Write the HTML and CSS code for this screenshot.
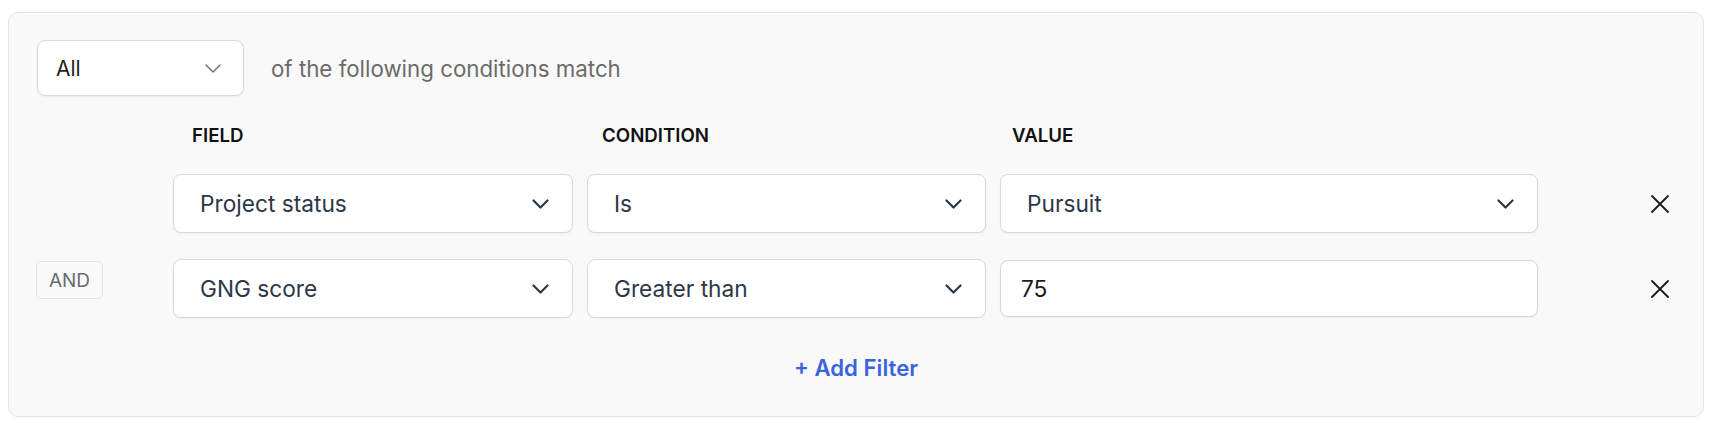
FILE: index.html
```html
<!DOCTYPE html>
<html>
<head>
    <title>Filter Conditions</title>
    <link rel="stylesheet" href="styles.css">
</head>
<body>
    <div class="panel">
        <div class="match-row">
            <div class="select select-all">
                <span>All</span>
                <svg class="chevron" width="16" height="9" viewBox="0 0 16 9"><path d="M1 1l7 7 7-7" fill="none" stroke="#6b6b6b" stroke-width="1.4" stroke-linecap="round" stroke-linejoin="round"/></svg>
            </div>
            <span class="match-text">of the following conditions match</span>
        </div>

        <div class="filters">
            <div></div>
            <div class="col-label label-field">FIELD</div>
            <div class="col-label label-condition">CONDITION</div>
            <div class="col-label label-value">VALUE</div>
            <div></div>
            <div></div>

            <!-- row 1 -->
            <div></div>
            <div class="select">
                <span>Project status</span>
                <svg class="chevron" width="17" height="10" viewBox="0 0 17 10"><path d="M1.5 1.5l7 7 7-7" fill="none" stroke="#2d3748" stroke-width="2.2" stroke-linecap="round" stroke-linejoin="round"/></svg>
            </div>
            <div class="select">
                <span>Is</span>
                <svg class="chevron" width="17" height="10" viewBox="0 0 17 10"><path d="M1.5 1.5l7 7 7-7" fill="none" stroke="#2d3748" stroke-width="2.2" stroke-linecap="round" stroke-linejoin="round"/></svg>
            </div>
            <div class="select">
                <span>Pursuit</span>
                <svg class="chevron" width="17" height="10" viewBox="0 0 17 10"><path d="M1.5 1.5l7 7 7-7" fill="none" stroke="#2d3748" stroke-width="2.2" stroke-linecap="round" stroke-linejoin="round"/></svg>
            </div>
            <div></div>
            <button class="remove">
                <svg width="18" height="18" viewBox="0 0 18 18"><path d="M1 1l16 16M17 1L1 17" stroke="#1a1a1a" stroke-width="1.8" stroke-linecap="round"/></svg>
            </button>

            <!-- row 2 -->
            <div class="badge">AND</div>
            <div class="select">
                <span>GNG score</span>
                <svg class="chevron" width="17" height="10" viewBox="0 0 17 10"><path d="M1.5 1.5l7 7 7-7" fill="none" stroke="#2d3748" stroke-width="2.2" stroke-linecap="round" stroke-linejoin="round"/></svg>
            </div>
            <div class="select">
                <span>Greater than</span>
                <svg class="chevron" width="17" height="10" viewBox="0 0 17 10"><path d="M1.5 1.5l7 7 7-7" fill="none" stroke="#2d3748" stroke-width="2.2" stroke-linecap="round" stroke-linejoin="round"/></svg>
            </div>
            <input class="value-input" type="text" value="75">
            <div></div>
            <button class="remove">
                <svg width="18" height="18" viewBox="0 0 18 18"><path d="M1 1l16 16M17 1L1 17" stroke="#1a1a1a" stroke-width="1.8" stroke-linecap="round"/></svg>
            </button>
        </div>

        <div class="add-row">
            <a href="#" class="add-filter">+ Add Filter</a>
        </div>
    </div>
</body>
</html>
```

FILE: styles.css
```css
body {
    font-family: Inter, "Noto Sans", sans-serif;
    background-color: #fff;
    color: #1f1f1f;
    margin: 12px 8px;
}
.panel {
    background-color: #f9f9f9;
    border: 1px solid #e3e3e3;
    border-radius: 10px;
    padding: 27px 28px 32px 28px;
}
.match-row {
    display: flex;
    align-items: center;
    gap: 27px;
}
.select {
    display: flex;
    align-items: center;
    justify-content: space-between;
    box-sizing: border-box;
    height: 59px;
    padding: 0 23px 0 26px;
    background-color: #fff;
    border: 1px solid #d3dae6;
    border-radius: 8px;
    box-shadow: 0 1px 2px rgba(0, 0, 0, 0.05);
    font-size: 22.7px;
    color: #2d3748;
}
.select-all {
    width: 207px;
    height: 56px;
    padding: 0 22px 0 18px;
    border-color: #d9d9d9;
    font-size: 21px;
    color: #1f1f1f;
}
.match-text {
    font-size: 22.3px;
    color: #6b6b6b;
}
.filters {
    display: grid;
    grid-template-columns: 122px 400px 399px 538px 1fr 30px;
    column-gap: 14px;
    row-gap: 26px;
    align-items: center;
    margin-top: 29px;
}
.col-label {
    font-size: 18.7px;
    font-weight: 600;
    line-height: 22px;
    color: #111;
    margin-bottom: 1px;
}
.label-field {
    padding-left: 19px;
}
.label-condition {
    padding-left: 15px;
}
.label-value {
    padding-left: 12px;
}
.badge {
    align-self: start;
    margin-top: 2px;
    width: 67px;
    height: 38px;
    box-sizing: border-box;
    display: flex;
    align-items: center;
    justify-content: center;
    border: 1px solid #e3e3e3;
    border-radius: 5px;
    font-size: 19px;
    color: #6b6b6b;
    margin-left: -1px;
}
.value-input {
    box-sizing: border-box;
    width: 100%;
    height: 57px;
    padding: 0 20px;
    border: 1px solid #d6d6d6;
    border-radius: 8px;
    box-shadow: 0 1px 2px rgba(0, 0, 0, 0.06);
    font-family: Inter, "Noto Sans", sans-serif;
    font-size: 22.7px;
    color: #1a1a1a;
    background-color: #fff;
    outline: none;
}
.remove {
    width: 30px;
    height: 30px;
    padding: 0;
    display: flex;
    align-items: center;
    justify-content: center;
    background: none;
    border: none;
    cursor: pointer;
}
.add-row {
    text-align: center;
    margin-top: 36px;
    line-height: 28px;
}
.add-filter {
    font-size: 22.2px;
    font-weight: 600;
    color: #3a63df;
    text-decoration: none;
}
```
